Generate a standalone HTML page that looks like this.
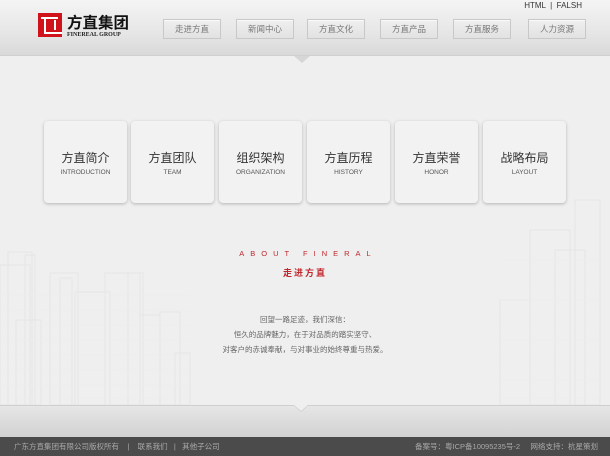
<!DOCTYPE html>
<html><head><meta charset="utf-8"><style>
*{margin:0;padding:0;box-sizing:border-box}
body{width:610px;height:456px;overflow:hidden;background:#efefef;font-family:"Liberation Sans","Noto Sans CJK SC",sans-serif;position:relative}
.hdr{position:absolute;left:0;top:0;width:610px;height:56px;background:linear-gradient(#f4f4f4,#e6e6e6 60%,#d9d9d9);border-bottom:1px solid #d0d0d0}
.notch{position:absolute;left:294px;top:56px;width:0;height:0;border-left:8px solid transparent;border-right:8px solid transparent;border-top:7px solid #d6d6d6}
.top{position:absolute;right:28px;top:1px;font-size:8px;color:#333}
.nav{position:absolute;top:19px;height:20px;width:58px;border:1px solid #c8c8c8;background:linear-gradient(#efefef,#e2e2e2);font-size:8.5px;color:#777;text-align:center;line-height:18px;box-shadow:inset 0 1px 0 #fafafa}
.logo{position:absolute;left:38px;top:13px}
.card{position:absolute;top:121px;width:83px;height:82px;background:#f2f2f2;border-radius:4px;box-shadow:0 1px 3px rgba(0,0,0,.25);text-align:center}
.card b{display:block;font-weight:normal;font-size:12px;color:#333;margin-top:28px}
.card i{display:block;font-style:normal;font-size:6.5px;color:#555;margin-top:3px}
.city{position:absolute;left:0;top:0}
.about{position:absolute;left:0;width:610px;text-align:center}
.ftop{position:absolute;left:0;top:405px;width:610px;height:32px;background:linear-gradient(#e6e6e6,#d2d2d2);border-top:1px solid #cfcfcf}
.fn{position:absolute;left:293px;top:405px;border-left:8px solid transparent;border-right:8px solid transparent;border-top:7px solid #cfcfcf}
.fn2{position:absolute;left:294px;top:405px;border-left:7px solid transparent;border-right:7px solid transparent;border-top:6px solid #efefef}
.fbar{position:absolute;left:0;top:437px;width:610px;height:19px;background:#4b4b4b;color:#aaa;font-size:7.5px;line-height:19px}
</style></head><body>
<svg class="city" width="610" height="456">
<g fill="none" stroke="#e6e6e6" stroke-width="1">
<rect x="0" y="265" width="30" height="140"/><rect x="8" y="252" width="24" height="153"/><rect x="25" y="255" width="10" height="150"/>
<rect x="16" y="320" width="25" height="85"/><rect x="50" y="273" width="28" height="132"/><rect x="60" y="278" width="12" height="127"/>
<rect x="75" y="292" width="35" height="113"/><rect x="105" y="273" width="35" height="132"/><rect x="128" y="273" width="15" height="132"/>
<rect x="140" y="315" width="20" height="90"/><rect x="160" y="312" width="20" height="93"/><rect x="175" y="353" width="15" height="52"/>
<rect x="530" y="230" width="40" height="175"/><rect x="555" y="250" width="30" height="155"/><rect x="575" y="200" width="25" height="205"/>
<rect x="500" y="300" width="30" height="105"/>
</g>
<g stroke="#ebebeb" stroke-width="0.6">
<path d="M0 280H190M0 295H190M0 310H190M0 325H190M0 340H190M0 355H190M0 370H190M0 385H190M0 398H190"/>
<path d="M500 260H600M500 280H600M500 300H600M500 320H600M500 340H600M500 360H600M500 380H600M500 398H600"/>
</g>
</svg>
<div class="hdr"></div><div class="notch"></div>
<div class="top">HTML &nbsp;|&nbsp; FALSH</div>
<div class="logo"><svg width="100" height="26">
<rect x="0" y="0" width="24" height="24" fill="#d0121b"/>
<path d="M3 5H20M7 5V20H24M17 7V17" stroke="#fff" stroke-width="2" fill="none"/>
<text x="29" y="15" font-size="15.5" font-family="Noto Sans CJK SC" fill="#111" font-weight="bold">方直集团</text>
<text x="29" y="23" font-size="6" font-family="Liberation Serif" fill="#222" font-weight="bold">FINEREAL GROUP</text>
</svg></div>
<div class="nav" style="left:163px">走进方直</div>
<div class="nav" style="left:236px">新闻中心</div>
<div class="nav" style="left:307px">方直文化</div>
<div class="nav" style="left:380px">方直产品</div>
<div class="nav" style="left:453px">方直服务</div>
<div class="nav" style="left:528px">人力资源</div>
<div class="card" style="left:44px"><b>方直简介</b><i>INTRODUCTION</i></div>
<div class="card" style="left:131px"><b>方直团队</b><i>TEAM</i></div>
<div class="card" style="left:219px"><b>组织架构</b><i>ORGANIZATION</i></div>
<div class="card" style="left:307px"><b>方直历程</b><i>HISTORY</i></div>
<div class="card" style="left:395px"><b>方直荣誉</b><i>HONOR</i></div>
<div class="card" style="left:483px"><b>战略布局</b><i>LAYOUT</i></div>
<div class="about" style="top:249px;font-size:7.5px;letter-spacing:6px;color:#c0272d;padding-left:6px">ABOUT FINERAL</div>
<div class="about" style="top:266px;font-size:9px;letter-spacing:2px;color:#c0272d;font-weight:bold">走进方直</div>
<div class="about" style="top:312px;font-size:7.5px;color:#666;line-height:15px">回望一路足迹，我们深信：<br>恒久的品牌魅力，在于对品质的踏实坚守、<br>对客户的赤诚奉献，与对事业的始终尊重与热爱。</div>
<div class="ftop"></div><div class="fn"></div><div class="fn2"></div>
<div class="fbar"><span style="position:absolute;left:14px">广东方直集团有限公司版权所有 &nbsp;&nbsp;&nbsp;| &nbsp;&nbsp;&nbsp;联系我们 &nbsp;&nbsp;| &nbsp;&nbsp;其他子公司</span><span style="position:absolute;right:12px">备案号：粤ICP备10095235号-2 &nbsp;&nbsp;&nbsp;&nbsp;网络支持：杭星策划</span></div>
</body></html>
